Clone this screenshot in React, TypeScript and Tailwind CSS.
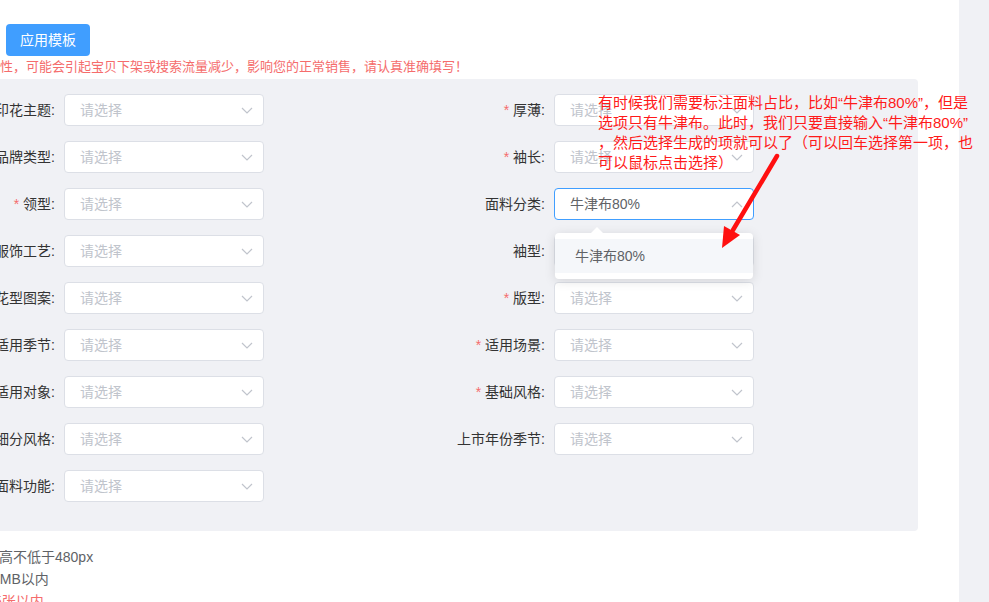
const CJK = "font-['Liberation_Sans','Noto_Sans_CJK_SC',sans-serif]";

type Field = { label: string; required?: boolean };

const rows: [Field, Field | null][] = [
  [{ label: "印花主题" }, { label: "厚薄", required: true }],
  [{ label: "品牌类型" }, { label: "袖长", required: true }],
  [{ label: "领型", required: true }, { label: "面料分类" }],
  [{ label: "服饰工艺" }, { label: "袖型" }],
  [{ label: "花型图案" }, { label: "版型", required: true }],
  [{ label: "适用季节" }, { label: "适用场景", required: true }],
  [{ label: "适用对象" }, { label: "基础风格", required: true }],
  [{ label: "细分风格" }, { label: "上市年份季节" }],
  [{ label: "面料功能" }, null],
];

function Chevron({ up }: { up?: boolean }) {
  return (
    <svg width="12" height="7" viewBox="0 0 12 7" className="shrink-0">
      <path
        d={up ? "M1 6 L6 1 L11 6" : "M1 1 L6 6 L11 1"}
        fill="none"
        stroke="#c0c4cc"
        strokeWidth="1.2"
      />
    </svg>
  );
}

function Select({ value, focused }: { value?: string; focused?: boolean }) {
  return (
    <div
      className={`flex h-8 w-[200px] items-center justify-between rounded border bg-white pl-[15px] pr-[10px] text-sm ${
        focused ? "border-[#409eff]" : "border-[#dcdfe6]"
      }`}
    >
      <span className={value ? "text-[#606266]" : "text-[#c0c4cc]"}>
        {value ?? "请选择"}
      </span>
      <Chevron up={focused} />
    </div>
  );
}

function FormItem({ field }: { field: Field }) {
  const open = field.label === "面料分类";
  return (
    <div className="flex items-center gap-[9px]">
      <div className="flex w-[55px] justify-end">
        <span className="whitespace-nowrap text-sm text-[#333]">
          {field.required && <span className="mr-1 text-[#f56c6c]">*</span>}
          {field.label}:
        </span>
      </div>
      <div className="relative">
        <Select value={open ? "牛津布80%" : undefined} focused={open} />
        {open && (
          <div className="absolute left-px top-[45px] z-10 w-[198px] rounded bg-white py-[6px] shadow-[0_2px_12px_rgba(0,0,0,0.12)]">
            <div className="absolute -top-[6px] left-[36px] h-0 w-0 border-x-[6px] border-b-[6px] border-x-transparent border-b-white" />
            <div className="flex h-[34px] items-center bg-[#f5f7fa] px-5 text-sm text-[#606266]">
              牛津布80%
            </div>
          </div>
        )}
      </div>
    </div>
  );
}

export default function App() {
  return (
    <div className={`relative flex h-[602px] w-[989px] overflow-hidden bg-white ${CJK}`}>
      <div className="flex-1 pt-6">
        <button className="ml-[6px] h-8 w-[84px] rounded bg-[#409eff] text-sm text-white">
          应用模板
        </button>
        <p className="mt-[2px] whitespace-nowrap text-[13px] leading-[18px] text-[#f56c6c]">
          性，可能会引起宝贝下架或搜索流量减少，影响您的正常销售，请认真准确填写！
        </p>

        <div className="mt-[3px] h-[452px] w-[918px] rounded-r bg-[#f0f1f5] pt-[15px]">
          <div className="grid grid-cols-[490px_490px] gap-y-[15px]">
            {rows.map(([l, r], i) => (
              <div key={i} className="contents">
                <FormItem field={l} />
                {r ? <FormItem field={r} /> : <div />}
              </div>
            ))}
          </div>
        </div>

        <div className="mt-[15px] text-sm leading-[22px] text-[#606266]">
          <p className="-ml-[15px] whitespace-nowrap">宽高不低于480px</p>
          <p className="-ml-[8px] whitespace-nowrap">3MB以内</p>
          <p className="-ml-[6px] whitespace-nowrap text-[#f56c6c]">5张以内</p>
        </div>
      </div>
      <div className="w-[30px] bg-[#f0f1f5]" />

      <div className="absolute left-[598px] top-[93px] z-20 whitespace-nowrap text-[15px] leading-[20px] text-[#ff1a1a]">
        有时候我们需要标注面料占比，比如“牛津布80%”，但是
        <br />
        选项只有牛津布。此时，我们只要直接输入“牛津布80%”
        <br />
        ，然后选择生成的项就可以了（可以回车选择第一项，也
        <br />
        可以鼠标点击选择）
      </div>

      <svg
        className="pointer-events-none absolute left-[710px] top-[150px] z-20"
        width="80"
        height="110"
        viewBox="0 0 80 110"
      >
        <line x1="67" y1="6" x2="23" y2="80" stroke="#ff1010" strokeWidth="4.5" strokeLinecap="round" />
        <polygon points="12,98 30,85 14,76" fill="#ff1010" />
      </svg>
    </div>
  );
}
